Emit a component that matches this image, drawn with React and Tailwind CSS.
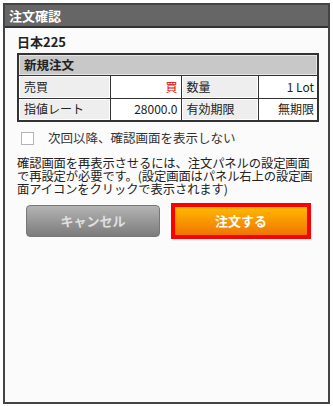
import React, { useState } from 'react';

const jp = { fontFamily: '"Noto Sans CJK JP", "Noto Sans", sans-serif' };

const Label = ({ children }) => (
  <td className="border border-[#333] bg-[#eeeeee] px-[5px] shadow-[inset_0_0_0_1px_#ffffff] text-left">{children}</td>
);

const Value = ({ children, className = '' }) => (
  <td className={`border border-[#333] bg-white px-[3px] text-right ${className}`}>{children}</td>
);

export default function App() {
  const [hide, setHide] = useState(false);

  return (
    <div className="w-[333px] h-[406px] bg-white pt-[3px] px-[3px]" style={jp}>
      <div className="h-[401px] border-2 border-[#444] bg-[#fbfbfb] flex flex-col">
        {/* title bar */}
        <div className="h-[23px] bg-[#666666] border-b-2 border-[#333] flex items-center px-[4px] text-white font-bold text-[13px] leading-none">
          注文確認
        </div>

        <div className="px-[12px] pt-[6px] text-[#222]">
          <div className="font-bold text-[13px] leading-[16px]">日本225</div>

          <table className="mt-[3px] w-[300px] border-collapse border-2 border-[#333] text-[12px] leading-none table-fixed">
            <colgroup>
              <col className="w-[92px]" />
              <col className="w-[71px]" />
              <col className="w-[77px]" />
              <col className="w-[60px]" />
            </colgroup>
            <tbody>
              <tr className="h-[21px]">
                <td colSpan={4} className="border border-[#333] bg-[#c8c8c8] px-[5px] font-bold text-[12.5px] shadow-[inset_0_0_0_1px_#e6e6e6]">新規注文</td>
              </tr>
              <tr className="h-[23px]">
                <Label>売買</Label>
                <Value className="text-[#e00000]">買</Value>
                <Label>数量</Label>
                <Value>1 Lot</Value>
              </tr>
              <tr className="h-[23px]">
                <Label>指値レート</Label>
                <Value>28000.0</Value>
                <Label>有効期限</Label>
                <Value>無期限</Value>
              </tr>
            </tbody>
          </table>

          <label className="mt-[10px] flex items-center gap-[14px] pl-[4px] text-[12.5px] text-[#333] leading-none cursor-pointer">
            <span
              onClick={() => setHide(!hide)}
              className="w-[13px] h-[13px] border border-[#b4b4b4] bg-white flex items-center justify-center text-[10px]"
            >
              {hide ? '✓' : ''}
            </span>
            次回以降、確認画面を表示しない
          </label>

          <p className="mt-[12px] w-[302px] text-[12.3px] leading-[13px] text-[#222] tracking-[-0.1px]">
            確認画面を再表示させるには、注文パネルの設定画面で再設定が必要です。(設定画面はパネル右上の設定画面アイコンをクリックで表示されます)
          </p>

          <div className="mt-[7px] flex items-center">
            <button className="ml-[9px] w-[134px] h-[32px] rounded-[4px] border border-[#777] bg-gradient-to-b from-[#b4b4b4] to-[#7c7c7c] text-[#e0e0e0] font-bold text-[13px]">
              キャンセル
            </button>
            <div className="ml-[11px] w-[140px] h-[36px] border-[4px] border-[#ff0000]">
              <button className="w-full h-full bg-gradient-to-b from-[#ffb800] to-[#f07400] text-white font-bold text-[13px]">
                注文する
              </button>
            </div>
          </div>
        </div>
      </div>
    </div>
  );
}
